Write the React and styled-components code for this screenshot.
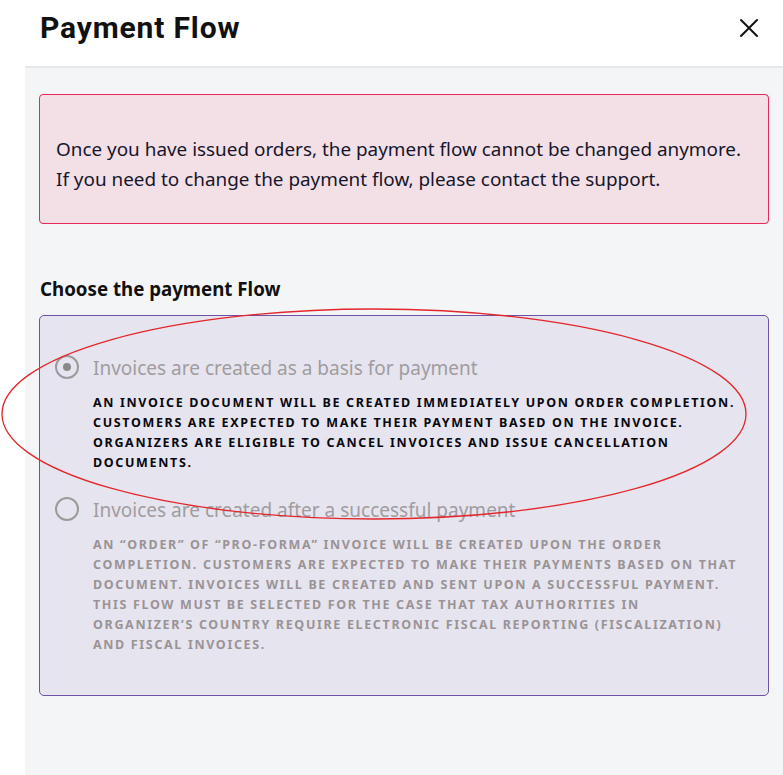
import React, { useState } from "react";
import styled, { createGlobalStyle } from "styled-components";

const Global = createGlobalStyle`
  html, body {
    margin: 0;
    padding: 0;
    background: #ffffff;
    font-family: "Noto Sans", "Open Sans", sans-serif;
  }
`;

const Page = styled.div`
  position: relative;
  width: 783px;
  height: 775px;
  overflow: hidden;
  background: #ffffff;
  display: flex;
  flex-direction: column;
`;

const Header = styled.header`
  height: 66px;
  box-sizing: border-box;
  display: flex;
  align-items: center;
  justify-content: space-between;
  padding: 0 22px 11px 40px;
  flex-shrink: 0;
  h1 {
    margin: 0;
    font-family: Roboto, "Noto Sans", sans-serif;
    font-size: 30px;
    font-weight: 700;
    color: #111111;
    letter-spacing: 0.85px;
  }
`;

const CloseButton = styled.button`
  border: none;
  background: none;
  padding: 0;
  width: 24px;
  height: 24px;
  cursor: pointer;
  display: flex;
  align-items: center;
  justify-content: center;
`;

const Body = styled.div`
  flex: 1;
  margin-left: 25px;
  background: #f4f5f7;
  border-top: 2px solid #e6e7ea;
  padding: 26px 14px 0 14px;
`;

const Alert = styled.div`
  border: 1px solid #e8285a;
  border-radius: 4px;
  background: #f3e0e7;
  padding: 39px 16px 29px 16px;
  font-size: 18.9px;
  line-height: 30px;
  color: #16162a;
`;

const SectionTitle = styled.h2`
  margin: 52px 0 14px 1px;
  font-size: 18.7px;
  font-weight: 700;
  color: #111111;
`;

const Options = styled.div`
  border: 1px solid #6c52a5;
  border-radius: 5px;
  background: #e6e4ee;
  padding: 40px 24px 40px 15px;
  display: flex;
  flex-direction: column;
  gap: 25px;
`;

const Option = styled.label`
  display: grid;
  grid-template-columns: 26px 1fr;
  column-gap: 12px;
  cursor: pointer;
`;

const Radio = styled.span`
  width: 20px;
  height: 20px;
  margin-top: -1px;
  border: 2.5px solid #9b9b9b;
  border-radius: 50%;
  display: flex;
  align-items: center;
  justify-content: center;
  &::after {
    content: "";
    width: 8px;
    height: 8px;
    border-radius: 50%;
    background: ${p => (p.$checked ? "#8a8a8a" : "transparent")};
  }
`;

const OptionTitle = styled.div`
  font-size: 19px;
  line-height: 24px;
  color: #a09ca0;
`;

const OptionText = styled.p`
  grid-column: 2;
  margin: 13px 0 0 0;
  font-size: 12.5px;
  line-height: 20px;
  font-weight: 700;
  letter-spacing: 1.65px;
  text-transform: uppercase;
  color: ${p => (p.$active ? "#08080f" : "#9a9396")};
`;

const Annotation = styled.svg`
  position: absolute;
  left: 0;
  top: 300px;
  pointer-events: none;
`;

const options = [
  {
    id: "invoice",
    title: "Invoices are created as a basis for payment",
    text:
      "An invoice document will be created immediately upon order completion. Customers are expected to make their payment based on the invoice. Organizers are eligible to cancel invoices and issue cancellation documents."
  },
  {
    id: "after",
    title: "Invoices are created after a successful payment",
    text:
      "An \u201Corder\u201D of \u201Cpro-forma\u201D invoice will be created upon the order completion. Customers are expected to make their payments based on that document. Invoices will be created and sent upon a successful payment. This flow must be selected for the case that tax authorities in organizer\u2019s country require electronic fiscal reporting (fiscalization) and fiscal invoices."
  }
];

export default function App() {
  const [flow, setFlow] = useState("invoice");

  return (
    <Page>
      <Global />
      <Header>
        <h1>Payment Flow</h1>
        <CloseButton aria-label="close">
          <svg width="20" height="20" viewBox="0 0 20 20">
            <path d="M2 2 L18 18 M18 2 L2 18" stroke="#111" strokeWidth="2" strokeLinecap="round" />
          </svg>
        </CloseButton>
      </Header>
      <Body>
        <Alert>
          Once you have issued orders, the payment flow cannot be changed anymore.
          <br />
          If you need to change the payment flow, please contact the support.
        </Alert>
        <SectionTitle>Choose the payment Flow</SectionTitle>
        <Options>
          {options.map(o => (
            <Option key={o.id} onClick={() => setFlow(o.id)}>
              <Radio $checked={flow === o.id} />
              <OptionTitle>{o.title}</OptionTitle>
              <OptionText $active={flow === o.id}>{o.text}</OptionText>
            </Option>
          ))}
        </Options>
      </Body>
      <Annotation width="783" height="230" viewBox="0 300 783 230">
        <ellipse cx="374" cy="414" rx="372" ry="105" fill="none" stroke="#e3262b" strokeWidth="1.3" />
      </Annotation>
    </Page>
  );
}
